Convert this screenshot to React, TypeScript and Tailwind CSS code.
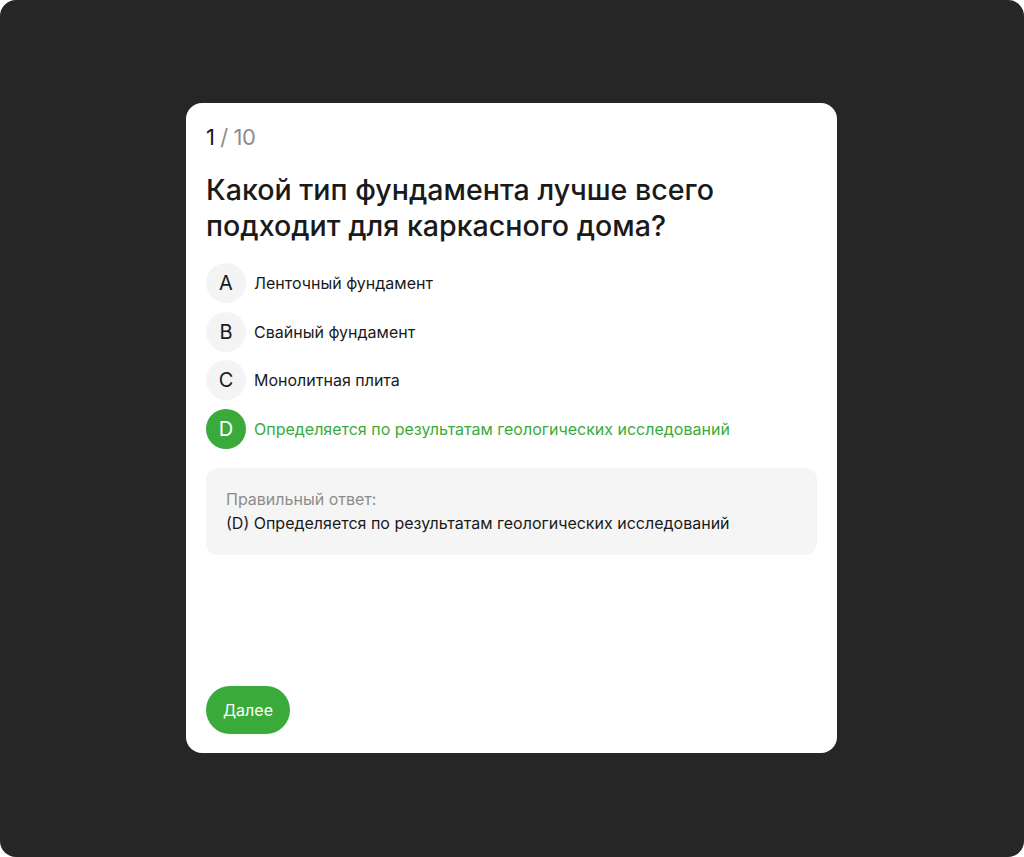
import React from 'react';

const options = [
  { key: 'A', label: 'Ленточный фундамент' },
  { key: 'B', label: 'Свайный фундамент' },
  { key: 'C', label: 'Монолитная плита' },
  { key: 'D', label: 'Определяется по результатам геологических исследований' },
];

const correct = 'D';

export default function App() {
  return (
    <div className="w-[1024px] h-[857px] bg-white" style={{ fontFamily: 'Inter, "Noto Sans", sans-serif' }}>
      <div className="w-full h-full bg-[#262626] rounded-[16px] flex justify-center pt-[103px]">
        <div className="w-[651px] h-[650px] bg-white rounded-[16px] pt-5 px-5 pb-[19px] flex flex-col mr-[1px]">
          <div className="text-[22px] leading-7 tracking-[-0.02em]">
            <span className="text-[#1a1a1a]">1</span>
            <span className="text-[#8c8c8c]"> / 10</span>
          </div>

          <h1 className="mt-[21px] text-[28.6px] leading-9 font-medium text-[#1a1a1a]">
            Какой тип фундамента лучше всего
            <br />
            подходит для каркасного дома?
          </h1>

          <div className="mt-[19px] flex flex-col gap-[8.6px]">
            {options.map((o) => {
              const ok = o.key === correct;
              return (
                <div key={o.key} className="flex items-center gap-2">
                  <div
                    className={
                      ok
                        ? 'w-10 h-10 rounded-full bg-[#3aaa3a] text-white flex items-center justify-center text-[20px]'
                        : 'w-10 h-10 rounded-full bg-[#f4f4f4] text-[#1a1a1a] flex items-center justify-center text-[20px]'
                    }
                  >
                    {o.key}
                  </div>
                  <span className={ok ? 'text-[16px] text-[#3aaa3a]' : 'text-[16px] text-[#1a1a1a]'}>
                    {o.label}
                  </span>
                </div>
              );
            })}
          </div>

          <div className="mt-[19px] bg-[#f5f5f5] rounded-[12px] px-5 pt-[19px] pb-5 text-[16px] leading-6">
            <div className="text-[#8c8c8c]">Правильный ответ:</div>
            <div className="text-[#1a1a1a]">(D) Определяется по результатам геологических исследований</div>
          </div>

          <div className="mt-auto">
            <button className="h-12 px-[17px] rounded-full bg-[#3aaa3a] text-white text-[16px]">
              Далее
            </button>
          </div>
        </div>
      </div>
    </div>
  );
}
